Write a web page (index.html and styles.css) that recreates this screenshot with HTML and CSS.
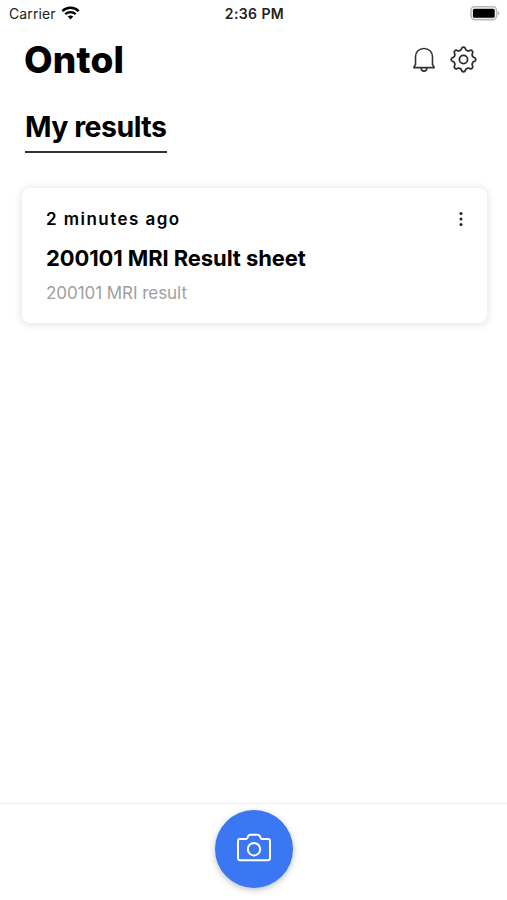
FILE: index.html
```html
<!DOCTYPE html>
<html lang="en">
<head>
<meta charset="utf-8">
<meta name="viewport" content="width=device-width, initial-scale=1">
<title>Ontol</title>
<link rel="stylesheet" href="styles.css">
</head>
<body>
<div class="app">
  <div class="status">
    <div class="carrier"><span>Carrier</span>
      <svg class="wifi" width="19" height="14" viewBox="0 0 18 14" fill="none" stroke="#000" stroke-width="2.4">
        <path d="M.8 5.1C5.3.7 12.7.7 17.200 5.100M3.800 8.200C6.800 5.400 11.200 5.400 14.200 8.200"/>
        <path d="M6.200 10.600C7.800 9.100 10.200 9.100 11.800 10.600L9 13.500Z" fill="#000" stroke="none"/>
      </svg>
    </div>
    <span class="time">2:36 PM</span>
    <svg class="battery" width="30" height="15" viewBox="0 0 30 15">
      <rect x="1" y=".8" width="25.600" height="12.800" rx="3.800" fill="#fff" stroke="#b9b9b9" stroke-width="1.600"/>
      <rect x="2.900" y="2.700" width="21.800" height="9" rx="1.500"/>
      <path d="M28 5.200Q30.600 7.200 28 9.200Z" fill="#aaa"/>
    </svg>
  </div>
  <header class="header">
    <h1>Ontol</h1>
    <div class="actions">
      <svg width="24" height="26" viewBox="0 0 24 26" fill="none" stroke="#333" stroke-width="1.600" stroke-linejoin="round">
        <path d="M3.500 17.500V10C3.500 4.800 7 1.500 12 1.500S20.500 4.800 20.500 10V17.500L22.300 20.600H1.700Z"/>
        <path d="M9.200 21C9.300 25.200 14.700 25.200 14.800 21"/>
      </svg>
      <svg width="27" height="27" viewBox="-13.500 -13.500 27 27" fill="none" stroke="#2c2c2c" stroke-width="1.750" stroke-linejoin="round">
        <path d="M-1.900-10.800A1.950 1.950 0 0 1 1.900-10.800C2.200-9 4.700-8 6.290-8.980A1.950 1.950 0 0 1 8.980-6.290C8-4.700 9-2.200 10.800-1.900A1.950 1.950 0 0 1 10.800 1.900C9 2.200 8 4.700 8.980 6.290A1.950 1.950 0 0 1 6.290 8.980C4.700 8 2.200 9 1.900 10.800A1.950 1.950 0 0 1-1.900 10.800C-2.200 9-4.700 8-6.290 8.980A1.950 1.950 0 0 1-8.980 6.290C-8 4.700-9 2.200-10.800 1.900A1.950 1.950 0 0 1-10.800-1.900C-9-2.200-8-4.700-8.980-6.290A1.950 1.950 0 0 1-6.290-8.980C-4.700-8-2.200-9-1.900-10.800Z"/>
        <circle r="4.100"/>
      </svg>
    </div>
  </header>
  <main class="main">
    <h2>My results</h2>
    <article class="card">
      <div class="card-top">
        <span class="ago">2 minutes ago</span>
        <svg class="more" width="4" height="16" viewBox="0 0 4 16" fill="#222"><circle cx="2" cy="2.400" r="1.500"/><circle cx="2" cy="8" r="1.500"/><circle cx="2" cy="13.600" r="1.500"/></svg>
      </div>
      <h3>200101 MRI Result sheet</h3>
      <p>200101 MRI result</p>
    </article>
  </main>
  <footer class="footer">
    <button class="camera" aria-label="Camera">
      <svg width="36" height="30" viewBox="0 0 36 30" fill="none" stroke="#fff" stroke-width="2" stroke-linejoin="round">
        <path d="M4 6H9.500Q10.700 6 11.300 4.900L12.300 2.900Q12.900 1.800 14.100 1.800H21.900Q23.100 1.800 23.700 2.900L24.700 4.900Q25.300 6 26.500 6H32Q34 6 34 8V25.200Q34 27.200 32 27.200H4Q2 27.200 2 25.200V8Q2 6 4 6Z"/>
        <circle cx="18" cy="16.200" r="6.200"/>
      </svg>
    </button>
  </footer>
</div>
</body>
</html>
```
FILE: styles.css
```css
* { box-sizing: border-box; }
body { margin: 0; background: #fff; color: #000; font-family: Inter, "Liberation Sans", sans-serif; }
h1, h2, h3, p { margin: 0; white-space: nowrap; }
svg { display: block; flex: none; }
.app { height: 900px; display: flex; flex-direction: column; overflow: hidden; }
.status { height: 28px; display: grid; grid-template-columns: 1fr auto 1fr; align-items: center; padding: 0 7px 1px 9px; line-height: 18px; }
.carrier { display: flex; align-items: center; gap: 5px; font-size: 14px; letter-spacing: .1px; color: #222; }
.wifi { margin-bottom: 2px; }
.time { font-size: 14px; font-weight: 600; color: #222; letter-spacing: .4px; }
.battery { justify-self: end; margin-bottom: 1px; }
.header { height: 64px; display: flex; align-items: center; justify-content: space-between; padding: 0 30px 1px 24px; }
h1 { font-size: 37px; font-weight: 800; line-height: 44px; letter-spacing: .2px; }
.actions { display: flex; align-items: center; gap: 14px; }
.main { flex: 1; padding: 16px 20px 0 22px; }
h2 { width: 142px; height: 45px; margin-left: 3px; border-bottom: 2px solid #333; font-size: 28.5px; font-weight: 700; line-height: 37px; letter-spacing: -.53px; }
.card { height: 135px; margin-top: 35px; padding: 20px 24px 0; border-radius: 8px; background: #fff; box-shadow: 0 1px 7px 2px rgba(0, 0, 0, .09); }
.card-top { height: 22px; display: flex; align-items: center; justify-content: space-between; }
.ago { font-size: 17px; font-weight: 600; letter-spacing: 1.46px; }
.more { margin-bottom: 1px; }
h3 { margin-top: 14px; font-size: 22px; font-weight: 700; line-height: 29px; letter-spacing: -.1px; }
p { margin-top: 9px; font-size: 17px; line-height: 22px; letter-spacing: -.05px; color: #a0a0a0; }
.footer { height: 97px; display: flex; justify-content: center; padding-top: 5.5px; border-top: 1px solid #eee; }
.camera { width: 78px; height: 78px; display: flex; align-items: center; justify-content: center; padding: 0 0 1px; border: 0; border-radius: 50%; background: #3b77f2; box-shadow: 0 2px 6px rgba(0, 0, 0, .25); }
```
